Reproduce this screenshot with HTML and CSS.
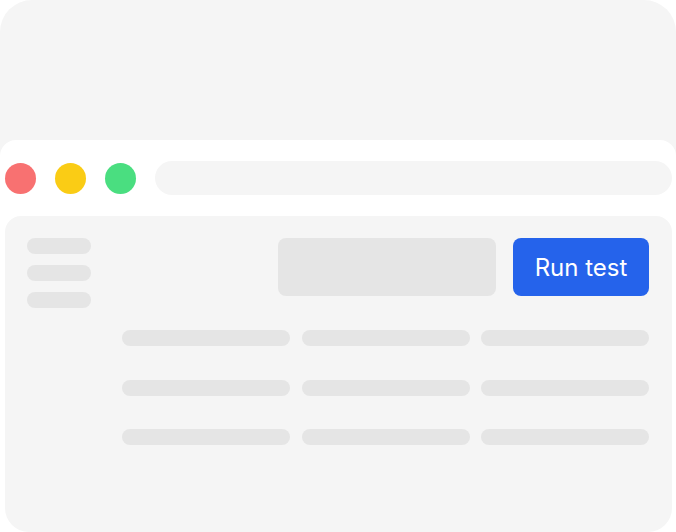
FILE: index.html
```html
<!DOCTYPE html>
<html>
<head>
<meta charset="utf-8">
<link rel="stylesheet" href="styles.css">
</head>
<body>
<div class="card">
  <div class="window">
    <div class="bar">
      <span class="dot red"></span>
      <span class="dot yellow"></span>
      <span class="dot green"></span>
      <div class="address"></div>
    </div>
    <div class="panel">
      <div class="sidebar">
        <div class="pill"></div>
        <div class="pill"></div>
        <div class="pill"></div>
      </div>
      <div class="main">
        <div class="toprow">
          <div class="field"></div>
          <button class="run">Run test</button>
        </div>
        <div class="table">
          <div class="cell"></div><div class="cell"></div><div class="cell"></div>
          <div class="cell"></div><div class="cell"></div><div class="cell"></div>
          <div class="cell"></div><div class="cell"></div><div class="cell"></div>
        </div>
      </div>
    </div>
  </div>
</div>
</body>
</html>
```
FILE: styles.css
```css
html, body {
  margin: 0;
  padding: 0;
  background: #ffffff;
}
.card {
  width: 676px;
  height: 532px;
  overflow: hidden;
  background: #f5f5f5;
  border-radius: 32px 32px 0 0;
  padding-top: 140px;
  box-sizing: border-box;
}
.window {
  background: #ffffff;
  border-radius: 16px 16px 0 0;
  height: 392px;
  padding: 0 4px 0 5px;
  display: flex;
  flex-direction: column;
}
.bar {
  display: flex;
  align-items: center;
  padding: 21px 0;
}
.dot {
  width: 31px;
  height: 31px;
  border-radius: 50%;
  margin-right: 19px;
  flex: none;
}
.red { background: #f87171; }
.yellow { background: #facc15; }
.green { background: #4ade80; }
.address {
  flex: 1;
  height: 34px;
  border-radius: 17px;
  background: #f5f5f5;
}
.panel {
  flex: 1;
  background: #f5f5f5;
  border-radius: 16px 16px 24px 24px;
  display: flex;
  padding: 22px 23px 0 22px;
}
.sidebar {
  width: 64px;
  display: flex;
  flex-direction: column;
  gap: 11px;
  flex: none;
}
.pill {
  height: 16px;
  border-radius: 8px;
  background: #e5e5e5;
}
.main {
  flex: 1;
  margin-left: 31px;
}
.toprow {
  display: flex;
  justify-content: flex-end;
  gap: 17px;
}
.field {
  width: 218px;
  height: 58px;
  border-radius: 8px;
  background: #e5e5e5;
}
.run {
  width: 136px;
  height: 58px;
  border: none;
  border-radius: 8px;
  background: #2563eb;
  color: #ffffff;
  font-family: Inter, "Noto Sans", sans-serif;
  font-size: 24px;
  font-weight: 400;
  padding: 0;
}
.table {
  margin-top: 34px;
  display: grid;
  grid-template-columns: repeat(3, 1fr);
  column-gap: 11.5px;
  row-gap: 33.5px;
}
.cell {
  height: 16px;
  border-radius: 8px;
  background: #e5e5e5;
}
```
